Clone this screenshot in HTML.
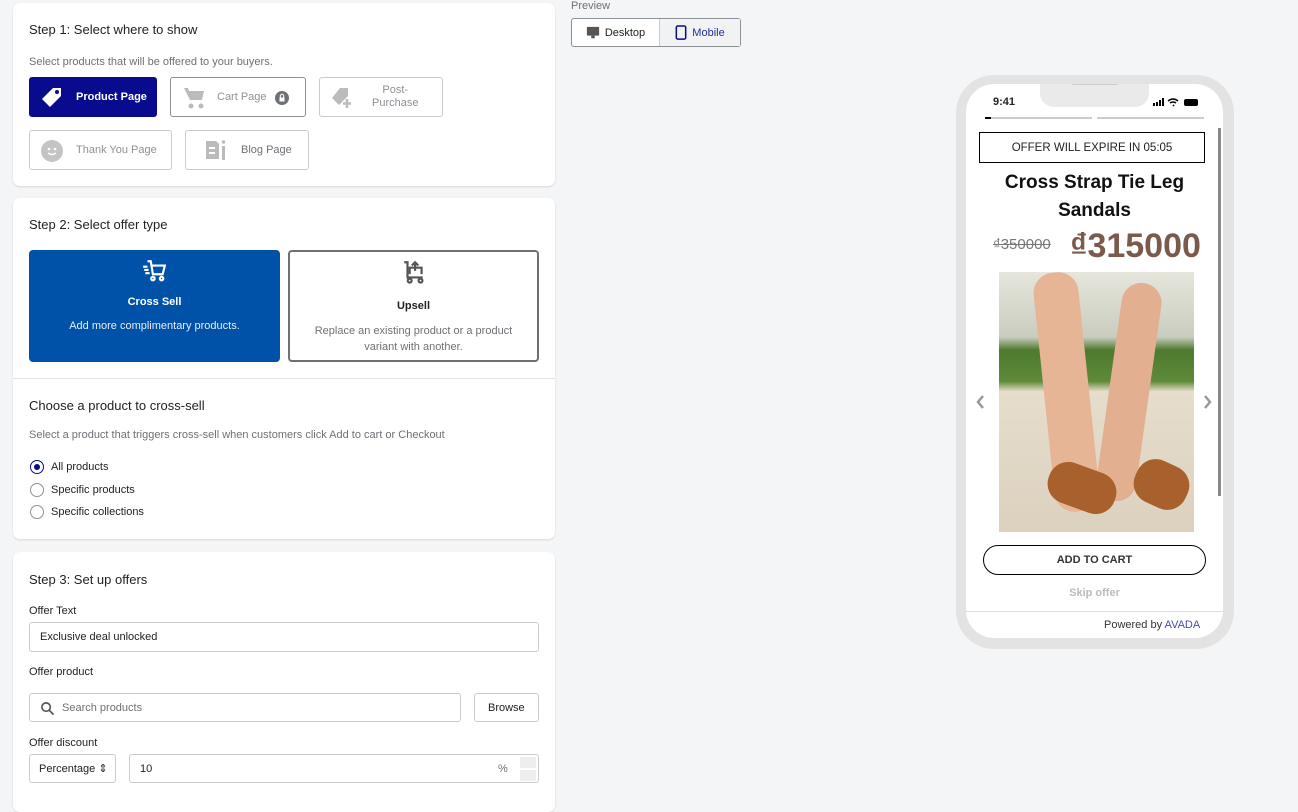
<!DOCTYPE html>
<html><head><meta charset="utf-8"><style>
*{box-sizing:border-box;margin:0;padding:0}
body{width:1298px;height:796px;background:#f4f5f7;font-family:"Liberation Sans",sans-serif;color:#202223;position:relative;overflow:hidden;font-size:12px}
.card{position:absolute;left:13px;width:542px;background:#fff;border-radius:7px;box-shadow:0 1px 2px rgba(0,0,0,.12)}
.h{position:absolute;left:16px;font-size:13px;color:#202223}
.s{position:absolute;left:16px;font-size:11px;color:#6d7175}
.btn{position:absolute;border:1px solid #c9cccf;border-radius:3px;background:#fff;display:flex;align-items:center;font-size:11px;color:#8c9196}
.abs{position:absolute}
.inp{position:absolute;border:1px solid #c9cccf;border-radius:3px;background:#fff;font-size:11px;display:flex;align-items:center;padding-left:10px}
.radio{position:absolute;left:17px;width:14px;height:14px;border:1px solid #8c9196;border-radius:50%}
.rl{position:absolute;left:38px;font-size:11px;color:#202223}
</style></head><body>

<div class="card" style="top:3px;height:183px">
 <div class="h" style="top:19px">Step 1: Select where to show</div>
 <div class="s" style="top:53px">Select products that will be offered to your buyers.</div>
 <div class="btn" style="left:16px;top:74px;width:128px;height:40px;background:#080b8e;border-color:#080b8e;color:#fff;font-weight:bold">
  <svg class="abs" style="left:10px;top:8px" width="24" height="24" viewBox="0 0 24 24"><path d="M13 2h8v8L10 21 2 13z" fill="#fff"/><circle cx="17" cy="6" r="2" fill="#080b8e"/></svg>
  <span style="position:absolute;left:46px">Product Page</span></div>
 <div class="btn" style="left:157px;top:74px;width:136px;height:40px;border-color:#8c9196">
  <svg class="abs" style="left:11px;top:8px" width="24" height="24" viewBox="0 0 24 24"><path d="M2 2h4l1 3h15l-2 9H8z" fill="#bbb"/><circle cx="9" cy="20" r="2.5" fill="#bbb"/><circle cx="19" cy="20" r="2.5" fill="#bbb"/></svg>
  <span style="position:absolute;left:46px">Cart Page</span>
  <svg class="abs" style="left:104px;top:13px" width="14" height="14" viewBox="0 0 14 14"><circle cx="7" cy="7" r="7" fill="#6d7175"/><rect x="4.5" y="6.5" width="5" height="4" fill="#fff"/><path d="M5.3 6.5V5a1.7 1.7 0 0 1 3.4 0v1.5" stroke="#fff" fill="none"/></svg></div>
 <div class="btn" style="left:306px;top:74px;width:124px;height:40px">
  <svg class="abs" style="left:10px;top:8px" width="24" height="24" viewBox="0 0 24 24"><path d="M10 2h8v8L9 19 2 12z" fill="#bbb"/><path d="M17 13v9M13 17.5h8" stroke="#bbb" stroke-width="2.5"/></svg>
  <span style="position:absolute;left:52px;top:6px;text-align:center;line-height:13px">Post-<br>Purchase</span></div>
 <div class="btn" style="left:16px;top:127px;width:143px;height:40px">
  <svg class="abs" style="left:10px;top:8px" width="24" height="24" viewBox="0 0 24 24"><circle cx="12" cy="12" r="11" fill="#c4c4c4"/><circle cx="9" cy="10" r="1.3" fill="#fff"/><circle cx="15" cy="10" r="1.3" fill="#fff"/><path d="M8 14q4 3 8 0" stroke="#fff" stroke-width="1.5" fill="none"/></svg>
  <span style="position:absolute;left:46px">Thank You Page</span></div>
 <div class="btn" style="left:172px;top:127px;width:124px;height:40px">
  <svg class="abs" style="left:18px;top:7px" width="24" height="24" viewBox="0 0 24 24"><path d="M2 3h10l3 3v15H2z" fill="#bbb"/><rect x="5" y="9" width="6" height="2" fill="#fff"/><rect x="5" y="14" width="6" height="2" fill="#fff"/><rect x="18" y="8" width="3" height="14" fill="#bbb"/><circle cx="19.5" cy="4" r="1.7" fill="#bbb"/></svg>
  <span style="position:absolute;left:55px;color:#6d7175">Blog Page</span></div>
</div>

<div class="card" style="top:198px;height:341px">
 <div class="h" style="top:19px">Step 2: Select offer type</div>
 <div class="abs" style="left:16px;top:52px;width:251px;height:112px;background:#0052a8;border-radius:4px;color:#fff;text-align:center">
  <svg class="abs" style="left:112px;top:8px" width="26" height="26" viewBox="0 0 24 24" fill="none" stroke="#fff" stroke-width="2"><path d="M6 3h3l2 12h9l2-8H10"/><circle cx="11" cy="19" r="1.6"/><circle cx="19" cy="19" r="1.6"/><path d="M2 8h4M3 11h4M4 14h4"/></svg>
  <div style="position:absolute;top:46px;width:100%;font-weight:bold;font-size:11px">Cross Sell</div>
  <div style="position:absolute;top:70px;width:100%;font-size:11px;color:#e6ecf5">Add more complimentary products.</div>
 </div>
 <div class="abs" style="left:275px;top:52px;width:251px;height:112px;border:2px solid #6d7175;border-radius:4px;text-align:center">
  <svg class="abs" style="left:111px;top:7px" width="26" height="26" viewBox="0 0 24 24" fill="none" stroke="#555" stroke-width="2"><path d="M3 3h3v14h14"/><path d="M8 14V8h11v6"/><path d="M13 11V4M10 6l3-3 3 3"/><circle cx="8" cy="20" r="1.8"/><circle cx="18" cy="20" r="1.8"/></svg>
  <div style="position:absolute;top:48px;width:100%;font-weight:bold;font-size:11px">Upsell</div>
  <div style="position:absolute;top:71px;width:100%;font-size:11px;color:#6d7175;line-height:16px">Replace an existing product or a product<br>variant with another.</div>
 </div>
 <div class="abs" style="left:0;top:180px;width:542px;border-top:1px solid #e1e3e5"></div>
 <div class="h" style="top:200px">Choose a product to cross-sell</div>
 <div class="s" style="top:231px">Select a product that triggers cross-sell when customers click Add to cart or Checkout</div>
 <div class="radio" style="top:262px;border-color:#080b8e"><div style="margin:3px;width:6px;height:6px;border-radius:50%;background:#080b8e"></div></div>
 <div class="rl" style="top:263px">All products</div>
 <div class="radio" style="top:285px"></div><div class="rl" style="top:286px">Specific products</div>
 <div class="radio" style="top:307px"></div><div class="rl" style="top:308px">Specific collections</div>
</div>

<div class="card" style="top:552px;height:260px">
 <div class="h" style="top:20px">Step 3: Set up offers</div>
 <div class="rl" style="left:16px;top:53px">Offer Text</div>
 <div class="inp" style="left:16px;top:70px;width:510px;height:30px">Exclusive deal unlocked</div>
 <div class="rl" style="left:16px;top:114px">Offer product</div>
 <div class="inp" style="left:16px;top:141px;width:432px;height:29px;color:#6d7175;padding-left:32px">
  <svg class="abs" style="left:10px;top:7px" width="15" height="15" viewBox="0 0 16 16" fill="none" stroke="#555" stroke-width="1.8"><circle cx="6.5" cy="6.5" r="4.5"/><path d="M10 10l4.5 4.5"/></svg>Search products</div>
 <div class="inp" style="left:461px;top:141px;width:65px;height:29px;padding-left:13px">Browse</div>
 <div class="rl" style="left:16px;top:185px">Offer discount</div>
 <div class="inp" style="left:16px;top:202px;width:87px;height:29px;padding-left:9px">Percentage ⇕</div>
 <div class="inp" style="left:116px;top:202px;width:410px;height:29px">10<span style="position:absolute;left:368px;color:#6d7175">%</span>
  <span style="position:absolute;right:2px;top:2px;width:16px;height:11px;background:#eee"></span><span style="position:absolute;right:2px;top:15px;width:16px;height:11px;background:#eee"></span></div>
</div>

<div class="abs" style="left:571px;top:0;font-size:11px;color:#6d7175">Preview</div>
<div class="abs" style="left:571px;top:18px;width:170px;height:29px;border:1px solid #8c9196;border-radius:3px;background:#fff;display:flex;font-size:11px">
 <div style="width:88px;border-right:1px solid #c9cccf;display:flex;align-items:center;justify-content:center;gap:5px"><svg width="14" height="14" viewBox="0 0 16 16"><rect x="1" y="1" width="14" height="10" rx="1" fill="#555"/><rect x="6" y="11" width="4" height="3" fill="#555"/></svg>Desktop</div>
 <div style="flex:1;display:flex;align-items:center;justify-content:center;gap:5px;background:#f1f2f4;color:#202e9a"><svg width="12" height="15" viewBox="0 0 12 16"><rect x="1" y="1" width="10" height="14" rx="1.5" fill="none" stroke="#080b8e" stroke-width="1.6"/></svg>Mobile</div>
</div>

<!-- phone -->
<div class="abs" style="left:956px;top:75px;width:278px;height:574px;border-radius:38px;background:#e3e3e3"></div>
<div class="abs" style="left:966px;top:84px;width:257px;height:554px;border-radius:28px;background:#fff;overflow:hidden" >
 <div class="abs" style="left:74px;top:0;width:109px;height:23px;background:#eaeaea;border-radius:0 0 14px 14px"></div>
 <div class="abs" style="left:106px;top:-2px;width:46px;height:3px;background:#ccc;border-radius:2px"></div>
 <div class="abs" style="left:27px;top:12px;font-size:11px;font-weight:bold">9:41</div>
 <div class="abs" style="left:187px;top:12px;width:50px;height:8px"><svg width="52" height="9" viewBox="0 0 52 9"><rect x="0" y="5" width="2" height="3" fill="#000"/><rect x="3" y="4" width="2" height="4" fill="#000"/><rect x="6" y="2" width="2" height="6" fill="#000"/><rect x="9" y="0" width="2" height="8" fill="#000"/><path d="M15 3q5-4 10 0M17 5q3-2 6 0M20 8l1-1" stroke="#000" stroke-width="1.5" fill="none"/><rect x="31" y="1" width="14" height="7" rx="2" fill="#000"/></svg></div>
 <div class="abs" style="left:19px;top:33px;width:107px;height:2px;background:#ccc"></div>
 <div class="abs" style="left:19px;top:33px;width:6px;height:2px;background:#000"></div>
 <div class="abs" style="left:131px;top:33px;width:107px;height:2px;background:#ccc"></div>
 <div class="abs" style="left:252px;top:44px;width:3px;height:368px;background:#888"></div>
 <div class="abs" style="left:13px;top:48px;width:226px;height:31px;border:1px solid #000;font-size:11.5px;display:flex;align-items:center;justify-content:center;color:#222">OFFER WILL EXPIRE IN 05:05</div>
 <div class="abs" style="left:0;top:85px;width:257px;text-align:center;font-size:19px;font-weight:bold;line-height:28px;color:#111">Cross Strap Tie Leg<br>Sandals</div>
 <div class="abs" style="left:27px;top:152px;font-size:15px;color:#777;text-decoration:line-through">₫350000</div>
 <div class="abs" style="left:104px;top:143px;font-size:34px;font-weight:bold;color:#7b5a4b">₫315000</div>
 <div class="abs" style="left:33px;top:188px;width:195px;height:260px;background:linear-gradient(180deg,#e6e6dc 0%,#c9cdbf 25%,#4f7a2f 30%,#5f8a3a 42%,#e6ddcc 46%,#dcd1bf 100%);overflow:hidden">
  <div class="abs" style="left:45px;top:0;width:45px;height:240px;background:#e6b596;border-radius:20px;transform:rotate(-6deg)"></div>
  <div class="abs" style="left:110px;top:10px;width:40px;height:220px;background:#e2b090;border-radius:20px;transform:rotate(8deg)"></div>
  <div class="abs" style="left:48px;top:195px;width:70px;height:42px;background:#a8602c;border-radius:20px;transform:rotate(20deg)"></div>
  <div class="abs" style="left:135px;top:190px;width:55px;height:45px;background:#a8602c;border-radius:20px;transform:rotate(25deg)"></div>
 </div>
 <svg class="abs" style="left:9px;top:310px" width="10" height="16" viewBox="0 0 10 16"><path d="M8 2L3 8l5 6" stroke="#999" stroke-width="2.5" fill="none"/></svg>
 <svg class="abs" style="left:237px;top:310px" width="10" height="16" viewBox="0 0 10 16"><path d="M2 2l5 6-5 6" stroke="#999" stroke-width="2.5" fill="none"/></svg>
 <div class="abs" style="left:17px;top:461px;width:223px;height:30px;border:1px solid #000;border-radius:15px;display:flex;align-items:center;justify-content:center;font-size:11px;font-weight:bold;color:#333">ADD TO CART</div>
 <div class="abs" style="left:0;top:503px;width:257px;text-align:center;font-size:11px;font-weight:bold;color:#bbb">Skip offer</div>
 <div class="abs" style="left:0;top:527px;width:257px;border-top:1px solid #ddd"></div>
 <div class="abs" style="left:138px;top:535px;font-size:11px;color:#333">Powered by <span style="color:#4a48b8">AVADA</span></div>
</div>
</body></html>
